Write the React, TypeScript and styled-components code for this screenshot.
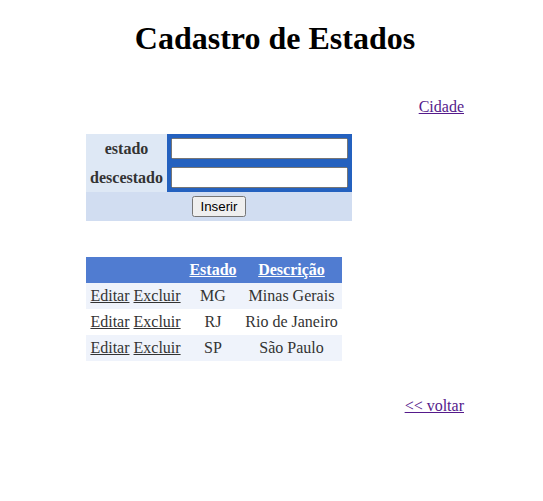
import React from "react";
import styled, { createGlobalStyle } from "styled-components";

const Global = createGlobalStyle`
  html, body { margin: 0; padding: 0; background: #fff; }
  body { font-family: "Liberation Serif", "Times New Roman", serif; font-size: 16px; color: #000; }
`;

const Page = styled.div`
  width: 378px;
  margin-left: 86px;
  display: flex;
  flex-direction: column;
`;

const Title = styled.h1`
  margin: 20px 0 0;
  font-size: 32px;
  line-height: 37px;
  font-weight: bold;
  text-align: center;
`;

const LinkRow = styled.div<{ $top: number }>`
  margin-top: ${(p) => p.$top}px;
  text-align: right;
  line-height: 18px;
`;

const NavLink = styled.a`
  color: #551a8b;
  text-decoration: underline;
`;

const Table = styled.table<{ $top: number }>`
  margin-top: ${(p) => p.$top}px;
  border-collapse: collapse;
  border: 0;
  color: #333333;
  font-size: 16px;
  align-self: flex-start;
`;

const Cell = styled.td<{ $bg?: string; $w?: number; $bold?: boolean }>`
  padding: 4px;
  text-align: center;
  background: ${(p) => p.$bg || "transparent"};
  width: ${(p) => (p.$w ? `${p.$w - 8}px` : "auto")};
  font-weight: ${(p) => (p.$bold ? "bold" : "normal")};
  white-space: nowrap;
  line-height: 18px;
`;

const HeadCell = styled.th<{ $w: number }>`
  padding: 4px;
  text-align: center;
  width: ${(p) => p.$w - 8}px;
  font-weight: bold;
  color: #fff;
  line-height: 18px;
`;

const HeadRow = styled.tr`
  background: #507cd1;
`;

const DataRow = styled.tr<{ $alt: boolean }>`
  background: ${(p) => (p.$alt ? "#ffffff" : "#eff3fb")};
`;

const HeadLink = styled.a`
  color: #fff;
  text-decoration: underline;
`;

const CmdLink = styled.a`
  color: #333333;
  text-decoration: underline;
`;

const Field = styled.input`
  box-sizing: border-box;
  width: 177px;
  height: 21px;
  display: block;
  margin: 0;
`;

const Btn = styled.button`
  display: inline-block;
  vertical-align: middle;
  margin: 0;
  height: 21px;
`;

const rows = [
  { uf: "MG", desc: "Minas Gerais" },
  { uf: "RJ", desc: "Rio de Janeiro" },
  { uf: "SP", desc: "São Paulo" },
];

export default function App() {
  return (
    <>
      <Global />
      <Page>
        <Title>Cadastro de Estados</Title>
        <LinkRow $top={41}>
          <NavLink href="#">Cidade</NavLink>
        </LinkRow>
        <Table $top={18}>
          <tbody>
            <tr>
              <Cell $bg="#dee8f5" $w={81} $bold>estado</Cell>
              <Cell $bg="#2461bf" $w={185}><Field type="text" /></Cell>
            </tr>
            <tr>
              <Cell $bg="#dee8f5" $w={81} $bold>descestado</Cell>
              <Cell $bg="#2461bf" $w={185}><Field type="text" /></Cell>
            </tr>
            <tr>
              <Cell $bg="#d1ddf1" colSpan={2}>
                <Btn type="button">Inserir</Btn>
              </Cell>
            </tr>
          </tbody>
        </Table>
        <Table $top={36}>
          <thead>
            <HeadRow>
              <HeadCell $w={99}>&nbsp;</HeadCell>
              <HeadCell $w={56}><HeadLink href="#">Estado</HeadLink></HeadCell>
              <HeadCell $w={101}><HeadLink href="#">Descrição</HeadLink></HeadCell>
            </HeadRow>
          </thead>
          <tbody>
            {rows.map((r, i) => (
              <DataRow key={r.uf} $alt={i % 2 === 1}>
                <Cell>
                  <CmdLink href="#">Editar</CmdLink> <CmdLink href="#">Excluir</CmdLink>
                </Cell>
                <Cell>{r.uf}</Cell>
                <Cell>{r.desc}</Cell>
              </DataRow>
            ))}
          </tbody>
        </Table>
        <LinkRow $top={36}>
          <NavLink href="#">&lt;&lt; voltar</NavLink>
        </LinkRow>
      </Page>
    </>
  );
}
